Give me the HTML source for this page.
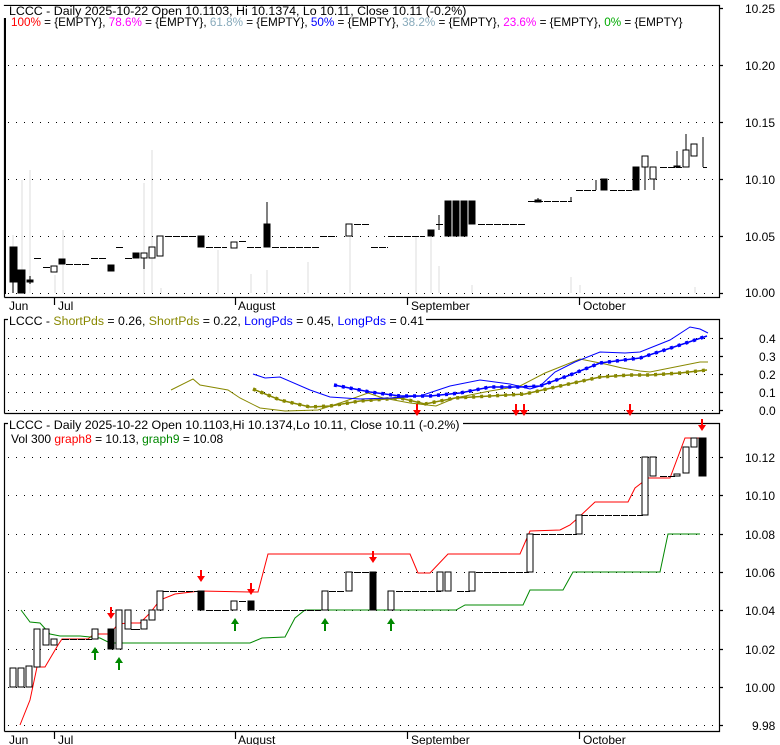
<!DOCTYPE html>
<html><head><meta charset="utf-8"><style>
html,body{margin:0;padding:0;background:#fff;}
svg{display:block;font-family:"Liberation Sans",Arial,sans-serif;font-size:12px;}
</style></head><body>
<svg width="780" height="745" viewBox="0 0 780 745" xmlns="http://www.w3.org/2000/svg">
<g stroke="#eee" stroke-width="2">
<line x1="13" y1="293" x2="13" y2="235"/><line x1="22" y1="293" x2="22" y2="180"/><line x1="30" y1="293" x2="30" y2="170"/><line x1="55" y1="293" x2="55" y2="275"/><line x1="63" y1="293" x2="63" y2="230"/><line x1="144" y1="293" x2="144" y2="183"/><line x1="152" y1="293" x2="152" y2="150"/><line x1="161" y1="293" x2="161" y2="288"/><line x1="218" y1="293" x2="218" y2="250"/><line x1="251" y1="293" x2="251" y2="274"/><line x1="267" y1="293" x2="267" y2="270"/><line x1="308" y1="293" x2="308" y2="262"/><line x1="350" y1="293" x2="350" y2="224"/><line x1="416" y1="293" x2="416" y2="237"/><line x1="431" y1="293" x2="431" y2="237"/><line x1="439" y1="293" x2="439" y2="266"/><line x1="472" y1="293" x2="472" y2="285"/><line x1="571" y1="293" x2="571" y2="277"/><line x1="580" y1="293" x2="580" y2="285"/><line x1="695" y1="293" x2="695" y2="287"/>
</g>
<g fill="none" stroke="#000" stroke-dasharray="1 7" stroke-width="1">
<line x1="8" y1="65.5" x2="718" y2="65.5"/><line x1="8" y1="122.5" x2="718" y2="122.5"/><line x1="8" y1="179.5" x2="718" y2="179.5"/><line x1="8" y1="236.5" x2="718" y2="236.5"/><line x1="8" y1="293.5" x2="718" y2="293.5"/>
<line x1="8" y1="338.5" x2="718" y2="338.5"/><line x1="8" y1="356.5" x2="718" y2="356.5"/><line x1="8" y1="374.5" x2="718" y2="374.5"/><line x1="8" y1="392.5" x2="718" y2="392.5"/><line x1="8" y1="410.5" x2="718" y2="410.5"/>
<line x1="8" y1="457.5" x2="718" y2="457.5"/><line x1="8" y1="495.5" x2="718" y2="495.5"/><line x1="8" y1="534.5" x2="718" y2="534.5"/><line x1="8" y1="572.5" x2="718" y2="572.5"/><line x1="8" y1="610.5" x2="718" y2="610.5"/><line x1="8" y1="649.5" x2="718" y2="649.5"/><line x1="8" y1="687.5" x2="718" y2="687.5"/><line x1="8" y1="725.5" x2="718" y2="725.5"/>
</g>
<g fill="none" stroke="#000" stroke-width="1.2">
<path d="M4.5,297.5 V5.5 H719.5 V297.5 H4.5"/>
<path d="M4.5,413.5 V319.5 H719.5 V413.5 H4.5"/>
<path d="M4.5,731.5 V423.5 H719.5 V731.5 H4.5"/>
<path d="M719,8.5h4M719,65.5h4M719,122.5h4M719,179.5h4M719,236.5h4M719,293.5h4M719,338.5h4M719,356.5h4M719,374.5h4M719,392.5h4M719,410.5h4M719,457.5h4M719,495.5h4M719,534.5h4M719,572.5h4M719,610.5h4M719,649.5h4M719,687.5h4M719,725.5h4"/>
<path d="M54.5,297v8M235.5,297v8M407.5,297v8M579.5,297v8M54.5,731v8M235.5,731v8M407.5,731v8M579.5,731v8"/>
</g>
<rect x="0" y="6" width="465" height="12" fill="#fff"/>
<rect x="4" y="18" width="2" height="276" fill="#000"/>
<rect x="8" y="18" width="680" height="11" fill="#fff"/>
<g stroke="#000" stroke-width="1" shape-rendering="crispEdges">
<line x1="13" y1="282" x2="13" y2="293"/><rect x="10" y="247" width="7" height="35" fill="#000"/>
<rect x="18" y="270" width="7" height="23" fill="#000"/>
<line x1="30" y1="276" x2="30" y2="284"/><rect x="27" y="280" width="6" height="2" fill="#000"/>
<path stroke-dasharray="7 1" d="M34,258.5h7M43,267.5h7M66,264.5h24M91,258.5h15M116,247.5h7M125,258.5h7M165,236.5h32M206,247.5h21M239,241.5h7M247,247.5h14M272,247.5h47M320,236.5h16M354,224.5h16M371,247.5h17M388,236.5h37M478,224.5h48M528,201.5h44M576,190.5h20M610,190.5h22M660,167.5h22M703,167.5h4"/>
<rect x="51" y="266" width="6" height="6" fill="#fff"/>
<rect x="59" y="259" width="6" height="5" fill="#000"/>
<rect x="108" y="265" width="6" height="6" fill="#000"/>
<rect x="133" y="253" width="6" height="5" fill="#000"/>
<line x1="144" y1="258" x2="144" y2="269"/><rect x="141" y="253" width="6" height="5" fill="#fff"/>
<rect x="149" y="247" width="6" height="11" fill="#fff"/>
<rect x="157" y="236" width="6" height="20" fill="#fff"/>
<rect x="198" y="236" width="6" height="11" fill="#000"/>
<rect x="231" y="242" width="6" height="6" fill="#fff"/>
<line x1="267" y1="202" x2="267" y2="247"/><rect x="264" y="224" width="6" height="23" fill="#000"/>
<rect x="346" y="224" width="6" height="12" fill="#fff"/>
<rect x="428" y="230" width="6" height="6" fill="#000"/>
<path d="M439,215v15M436,224.5h7"/>
<rect x="445" y="201" width="6" height="35" fill="#000"/><rect x="453" y="201" width="6" height="35" fill="#000"/><rect x="461" y="201" width="6" height="35" fill="#000"/><rect x="469" y="201" width="6" height="23" fill="#000"/>
<path d="M538,198v3M571,197v4M596,180v10M677,151v16M703,137v30"/>
<rect x="535" y="200" width="6" height="2" fill="#000"/>
<rect x="601" y="179" width="6" height="11" fill="#000"/>
<rect x="633" y="167" width="6" height="23" fill="#000"/>
<path d="M645,167v23M654,179v11M686,134v16"/>
<rect x="642" y="156" width="6" height="11" fill="#fff"/>
<rect x="650" y="167" width="6" height="12" fill="#fff"/>
<rect x="674" y="166" width="6" height="1" fill="#000"/>
<rect x="683" y="150" width="6" height="17" fill="#fff"/>
<rect x="691" y="144" width="6" height="12" fill="#fff"/>
</g>
<text x="9" y="15" fill="#000" font-size="12.4">LCCC - Daily 2025-10-22 Open 10.1103, Hi 10.1374, Lo 10.11, Close 10.11 (-0.2%)</text>
<text x="11" y="26" font-size="11.7"><tspan fill="#f00">100%</tspan><tspan fill="#000"> = {EMPTY}, </tspan><tspan fill="#f0f">78.6%</tspan><tspan fill="#000"> = {EMPTY}, </tspan><tspan fill="#8ab">61.8%</tspan><tspan fill="#000"> = {EMPTY}, </tspan><tspan fill="#00f">50%</tspan><tspan fill="#000"> = {EMPTY}, </tspan><tspan fill="#8ab">38.2%</tspan><tspan fill="#000"> = {EMPTY}, </tspan><tspan fill="#f0f">23.6%</tspan><tspan fill="#000"> = {EMPTY}, </tspan><tspan fill="#0a0">0%</tspan><tspan fill="#000"> = {EMPTY}</tspan></text>
<g fill="#000">
<text x="745" y="13">10.25</text><text x="745" y="70">10.20</text><text x="745" y="127">10.15</text><text x="745" y="184">10.10</text><text x="745" y="241">10.05</text><text x="745" y="297">10.00</text>
<text x="9" y="310">Jun</text><text x="58" y="310">Jul</text><text x="238" y="310">August</text><text x="411" y="310">September</text><text x="583" y="310">October</text>
<text x="9" y="744">Jun</text><text x="58" y="744">Jul</text><text x="238" y="744">August</text><text x="411" y="744">September</text><text x="583" y="744">October</text>
<text x="759" y="343">0.4</text><text x="759" y="361">0.3</text><text x="759" y="379">0.2</text><text x="759" y="397">0.1</text><text x="759" y="415">0.0</text>
<text x="745" y="462">10.12</text><text x="745" y="500">10.10</text><text x="745" y="539">10.08</text><text x="745" y="577">10.06</text><text x="745" y="615">10.04</text><text x="745" y="654">10.02</text><text x="745" y="692">10.00</text><text x="752" y="730">9.98</text>
</g>
<rect x="8" y="313" width="418" height="12" fill="#fff"/>
<text x="9" y="325" font-size="12.3"><tspan fill="#000">LCCC - </tspan><tspan fill="#880">ShortPds</tspan><tspan fill="#000"> = 0.26, </tspan><tspan fill="#880">ShortPds</tspan><tspan fill="#000"> = 0.22, </tspan><tspan fill="#00f">LongPds</tspan><tspan fill="#000"> = 0.45, </tspan><tspan fill="#00f">LongPds</tspan><tspan fill="#000"> = 0.41</tspan></text>
<g fill="none" stroke-width="1">
<polyline stroke="#880" points="171,390 193,379 200,385 228,390 240,398 260,408 285,411 318,410 340,403 368,393 383,398 410,403 436,406 455,398 490,391 520,386 545,373 580,359 605,364 622,368 640,371 650,372 680,366 700,362 708,362"/>
<polyline stroke="#880" stroke-width="1.5" points="253,389 280,400 310,407 330,406 360,401 400,398 425,404 455,398 490,396 525,394 560,386 600,377 630,375 650,375 680,373 707,370"/>
<polyline stroke="#880" stroke-width="3.5" stroke-dasharray="3 5" points="253,389 280,400 310,407 330,406 360,401 400,398 425,404 455,398 490,396 525,394 560,386 600,377 630,375 650,375 680,373 707,370"/>
<polyline stroke="#00f" points="253,374 265,378 280,377 310,390 330,397 360,399 390,398 420,396 450,386 480,380 510,384 530,389 540,386 555,372 575,362 600,352 625,353 640,352 670,340 690,327 700,329 708,333"/>
<polyline stroke="#00f" stroke-width="1.5" points="334,385 370,392 400,396 430,396 460,393 490,387 520,387 540,386 570,375 600,363 640,358 680,345 707,336"/>
<polyline stroke="#00f" stroke-width="3.5" stroke-dasharray="3 5" points="334,385 370,392 400,396 430,396 460,393 490,387 520,387 540,386 570,375 600,363 640,358 680,345 707,336"/>
</g>
<g fill="#f00">
<path d="M416,404h2v6h3l-4,6l-4,-6h3z"/><path d="M515,404h2v6h3l-4,6l-4,-6h3z"/><path d="M523,404h2v6h3l-4,6l-4,-6h3z"/><path d="M629,404h2v6h3l-4,6l-4,-6h3z"/>
</g>
<rect x="8" y="418" width="455" height="12" fill="#fff"/>
<text x="9" y="429" fill="#000" font-size="12.4">LCCC - Daily 2025-10-22 Open 10.1103,Hi 10.1374,Lo 10.11, Close 10.11 (-0.2%)</text>
<text x="11" y="443"><tspan fill="#000">Vol 300 </tspan><tspan fill="#f00">graph8</tspan><tspan fill="#000"> = 10.13, </tspan><tspan fill="#080">graph9</tspan><tspan fill="#000"> = 10.08</tspan></text>
<g fill="none" stroke-width="1">
<polyline stroke="#f00" points="20,725 30,700 37,667 45,667 58,645 62,639 88,639 94,634 110,634 118,624 128,623 140,623 150,613 160,600 175,594 200,591 250,592 258,592 268,554 410,554 418,573 430,573 448,554 520,554 530,531 560,530 570,525 578,518 595,502 628,502 635,488 648,478 670,478 685,438 700,438"/>
<polyline stroke="#080" points="21,610 30,622 40,623 50,634 60,636 80,636 100,638 110,643 120,643 250,643 262,638 285,637 295,618 305,610 456,610 465,605 523,605 530,590 563,590 573,572 660,572 668,534 700,534"/>
</g>
<g stroke="#000" stroke-width="1" shape-rendering="crispEdges">
<path stroke-dasharray="7 1" d="M62,639.5h30M162,591.5h36M206,610.5h24M239,601.5h8M259,610.5h62M329,591.5h16M354,572.5h16M396,591.5h45M457,591.5h13M476,572.5h52M533,534.5h44M581,515.5h62M660,476.5h16"/>
<rect x="10" y="668" width="6" height="19" fill="#fff"/><rect x="18" y="668" width="6" height="19" fill="#fff"/><rect x="26" y="666" width="6" height="21" fill="#fff"/>
<rect x="34" y="629" width="6" height="38" fill="#fff"/><rect x="43" y="629" width="6" height="16" fill="#fff"/><rect x="51" y="639" width="6" height="6" fill="#fff"/>
<rect x="92" y="629" width="6" height="10" fill="#fff"/><rect x="108" y="629" width="6" height="20" fill="#000"/><rect x="116" y="610" width="6" height="39" fill="#fff"/>
<rect x="125" y="610" width="6" height="19" fill="#fff"/><path d="M131,629.5h9"/><rect x="141" y="620" width="6" height="9" fill="#fff"/><rect x="149" y="610" width="6" height="10" fill="#fff"/><rect x="157" y="591" width="6" height="19" fill="#fff"/>
<rect x="198" y="591" width="6" height="19" fill="#000"/><rect x="231" y="601" width="6" height="9" fill="#fff"/><rect x="248" y="601" width="6" height="9" fill="#000"/>
<rect x="322" y="591" width="6" height="19" fill="#fff"/><rect x="346" y="572" width="6" height="19" fill="#fff"/><rect x="370" y="572" width="6" height="38" fill="#000"/><rect x="388" y="591" width="6" height="19" fill="#fff"/>
<rect x="437" y="572" width="6" height="19" fill="#fff"/><rect x="445" y="572" width="6" height="19" fill="#fff"/><rect x="469" y="572" width="6" height="19" fill="#fff"/>
<rect x="527" y="534" width="6" height="38" fill="#fff"/><rect x="576" y="515" width="6" height="19" fill="#fff"/>
<rect x="642" y="457" width="6" height="58" fill="#fff"/><rect x="650" y="457" width="6" height="19" fill="#fff"/><rect x="674" y="474" width="6" height="2" fill="#fff"/><rect x="683" y="447" width="6" height="26" fill="#fff"/><rect x="691" y="438" width="6" height="9" fill="#fff"/><rect x="699" y="438" width="7" height="38" fill="#000"/>
</g>
<g fill="#f00">
<path d="M110,607h2v6h3l-4,6l-4,-6h3z"/><path d="M200,570h2v6h3l-4,6l-4,-6h3z"/><path d="M250,583h2v6h3l-4,6l-4,-6h3z"/><path d="M372,551h2v6h3l-4,6l-4,-6h3z"/><path d="M701,419h2v6h3l-4,6l-4,-6h3z"/>
</g>
<g fill="#080">
<path d="M95,647l4,6h-3v7h-2v-7h-3z"/><path d="M119,657l4,6h-3v7h-2v-7h-3z"/><path d="M235,618l4,6h-3v7h-2v-7h-3z"/><path d="M325,618l4,6h-3v7h-2v-7h-3z"/><path d="M391,618l4,6h-3v7h-2v-7h-3z"/>
</g>
</svg>
</body></html>
